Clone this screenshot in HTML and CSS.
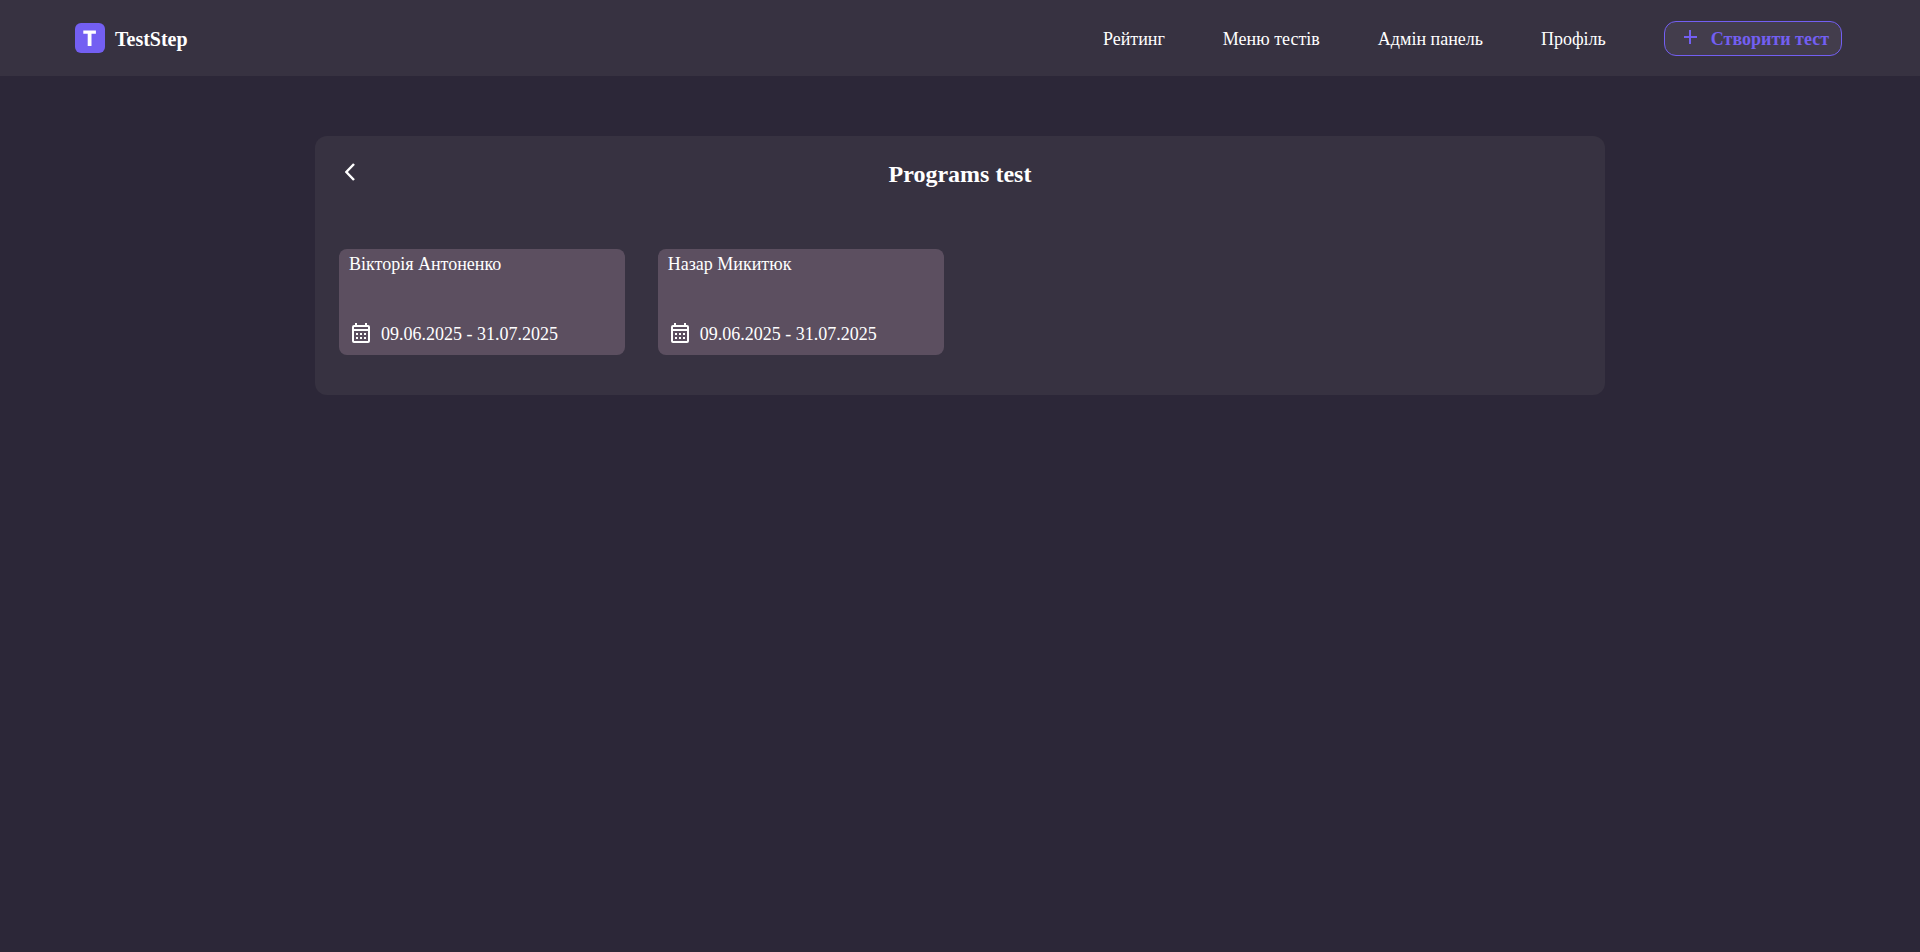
FILE: index.html
```html
<!DOCTYPE html>
<html lang="uk">
<head>
<meta charset="utf-8">
<meta name="viewport" content="width=device-width, initial-scale=1">
<title>TestStep</title>
<link rel="stylesheet" href="styles.css">
</head>
<body>
<header class="header">
  <a class="brand" href="#">
    <span class="brand-mark" aria-hidden="true">
      <svg width="30" height="30" viewBox="0 0 30 30"><rect width="30" height="30" rx="6" fill="#735ff2"/><path d="M8.300 7.600h12.600v3.100h-4.400v12.300h-3.800v-12.300h-4.400z" fill="#fff"/></svg>
    </span>
    <span class="brand-name">TestStep</span>
  </a>
  <nav class="nav">
    <a class="nav-link" href="#">Рейтинг</a>
    <a class="nav-link" href="#">Меню тестів</a>
    <a class="nav-link" href="#">Адмін панель</a>
    <a class="nav-link" href="#">Профіль</a>
    <button class="create" type="button">
      <svg class="create-icon" width="14" height="14" viewBox="0 0 14 14" aria-hidden="true"><path d="M7 0v14M1 7h13" fill="none" stroke="currentColor" stroke-width="2"/></svg>
      Створити тест
    </button>
  </nav>
</header>
<main class="page">
  <section class="panel">
    <div class="panel-head">
      <button class="back" type="button" aria-label="Назад">
        <svg width="10" height="18" viewBox="0 0 10 18" aria-hidden="true"><path d="M9 1L1.300 9L9 17" fill="none" stroke="currentColor" stroke-width="2.500" stroke-linejoin="round"/></svg>
      </button>
      <h1 class="title">Programs test</h1>
    </div>
    <div class="cards">
      <article class="card">
        <h2 class="name">Вікторія Антоненко</h2>
        <p class="dates">
          <svg class="calendar" width="18" height="20" viewBox="0 0 18 20" aria-hidden="true"><path fill="currentColor" fill-rule="evenodd" d="M3 0h2v2h8V0h2v2h1a2 2 0 0 1 2 2v14a2 2 0 0 1-2 2H2a2 2 0 0 1-2-2V4a2 2 0 0 1 2-2h1zM2 4v2h14V4zM2 8v10h14V8zM4 10h2v2H4zM8 10h2v2H8zM12 10h2v2h-2zM4 14h2v2H4zM8 14h2v2H8zM12 14h2v2h-2z"/></svg>
          09.06.2025 - 31.07.2025
        </p>
      </article>
      <article class="card">
        <h2 class="name">Назар Микитюк</h2>
        <p class="dates">
          <svg class="calendar" width="18" height="20" viewBox="0 0 18 20" aria-hidden="true"><path fill="currentColor" fill-rule="evenodd" d="M3 0h2v2h8V0h2v2h1a2 2 0 0 1 2 2v14a2 2 0 0 1-2 2H2a2 2 0 0 1-2-2V4a2 2 0 0 1 2-2h1zM2 4v2h14V4zM2 8v10h14V8zM4 10h2v2H4zM8 10h2v2H8zM12 10h2v2h-2zM4 14h2v2H4zM8 14h2v2H8zM12 14h2v2h-2z"/></svg>
          09.06.2025 - 31.07.2025
        </p>
      </article>
    </div>
  </section>
</main>
</body>
</html>
```
FILE: styles.css
```css
* {
  box-sizing: border-box;
}

body {
  margin: 0;
  min-height: 100vh;
  background: #2c2738;
  color: #fff;
  font: 18px/20px "Liberation Serif", "Times New Roman", serif;
}

svg {
  display: block;
}

.header {
  display: flex;
  align-items: center;
  justify-content: space-between;
  flex-wrap: wrap;
  gap: 16px;
  min-height: 76px;
  padding: 0 78px 0 75px;
  background: #373241;
}

.brand {
  display: flex;
  align-items: center;
  gap: 10px;
  color: inherit;
  text-decoration: none;
}

.brand-name {
  padding-top: 2px;
  font-size: 20px;
  font-weight: 700;
}

.nav {
  display: flex;
  align-items: center;
  flex-wrap: wrap;
  gap: 16px 58px;
}

.nav-link {
  padding-top: 2px;
  color: inherit;
  text-decoration: none;
}

.create {
  display: flex;
  align-items: center;
  gap: 14px;
  padding: 7px 12px 6px 18px;
  border: 1px solid #735ff2;
  border-radius: 12px;
  background: #433d4c;
  color: #735ff2;
  font: inherit;
  font-weight: 700;
  cursor: pointer;
}

.create-icon {
  margin-bottom: 4px;
}

.page {
  padding: 60px 24px;
}

.panel {
  max-width: 1290px;
  margin: 0 auto;
  padding: 24px 24px 40px;
  border-radius: 12px;
  background: #373241;
}

.panel-head {
  display: grid;
  grid-template-columns: 24px 1fr 24px;
  align-items: center;
  margin-bottom: 61px;
}

.back {
  display: flex;
  padding: 0 6px 4px;
  border: 0;
  background: none;
  color: inherit;
  cursor: pointer;
}

.title {
  margin: 0;
  font-size: 24px;
  line-height: 28px;
  text-align: center;
}

.cards {
  display: grid;
  grid-template-columns: repeat(auto-fill, minmax(270px, 1fr));
  gap: 33px;
}

.card {
  display: flex;
  flex-direction: column;
  justify-content: space-between;
  min-height: 106px;
  padding: 5px 10px 10px;
  border-radius: 8px;
  background: #5c4f60;
}

.name {
  margin: 0;
  font-size: 18px;
  font-weight: 400;
}

.dates {
  display: flex;
  align-items: center;
  gap: 11px;
  margin: 0;
  padding-left: 3px;
}

.calendar {
  margin-bottom: 2px;
}
```
